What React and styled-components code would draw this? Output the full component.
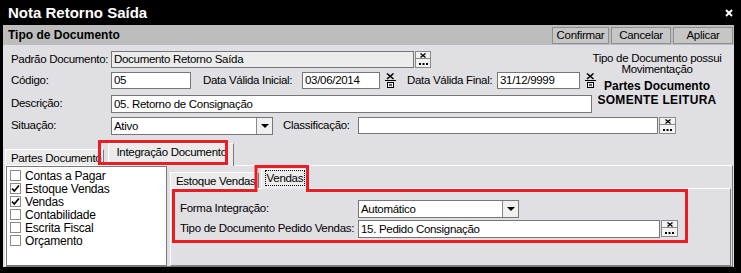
import React from "react";
import styled, { createGlobalStyle } from "styled-components";

const SANS = `"Liberation Sans", Arial, sans-serif`;

const GlobalStyle = createGlobalStyle`
  html, body {
    margin: 0;
    padding: 0;
    background: #000;
  }
  body {
    font-family: ${SANS};
    font-size: 11.5px;
    letter-spacing: -0.3px;
    color: #000;
  }
  * { box-sizing: border-box; }
`;

const Screen = styled.div`
  position: relative;
  width: 741px;
  height: 273px;
  background: #000;
  overflow: hidden;
  display: flex;
  flex-direction: column;
`;

const TitleBar = styled.div`
  height: 25px;
  display: flex;
  align-items: center;
  justify-content: space-between;
  padding: 0 8px 0 8px;
  color: #fff;
  font: bold 15px ${SANS};
  letter-spacing: 0;
`;

const Panel = styled.div`
  margin: 0 7px 0 3px;
  height: 242px;
  background: #e0dfe3;
  display: flex;
  flex-direction: column;
`;

const Header = styled.div`
  height: 20px;
  background: #bdbdbd;
  display: flex;
  align-items: center;
  justify-content: space-between;
  padding: 0 1px 0 5px;
  font: bold 12px ${SANS};
  letter-spacing: 0;
`;

const ButtonGroup = styled.div`
  display: flex;
  gap: 2px;
  font: 11.5px ${SANS};
  letter-spacing: -0.3px;
`;

const HeaderButton = styled.div`
  width: ${p => p.$w}px;
  height: 17px;
  border: 1px solid #8e8e8e;
  background: #c6c6c6;
  line-height: 15px;
  text-align: center;
`;

const FormGrid = styled.div`
  display: grid;
  grid-template-columns: 582px 128px;
  grid-template-rows: 17px 19px 18px 17px;
  row-gap: 4px;
  padding: 6px 0 0 8px;
`;

const Row = styled.div`
  display: flex;
  align-items: flex-start;
  grid-column: ${p => (p.$wide ? "1 / -1" : "1")};
  white-space: nowrap;
`;

const Label = styled.div`
  width: ${p => p.$w}px;
  margin-left: ${p => p.$ml || 0}px;
  flex: none;
  height: 17px;
  line-height: 17px;
  white-space: nowrap;
`;

const TextBox = styled.div`
  width: ${p => p.$w}px;
  height: ${p => p.$h || 17}px;
  flex: none;
  border: 1px solid #767676;
  background: ${p => (p.$disabled ? "#ececec" : "#fff")};
  padding: 0 2px;
  line-height: ${p => (p.$h || 17) - 2}px;
  overflow: hidden;
  white-space: nowrap;
`;

const Combo = styled.div`
  width: ${p => p.$w}px;
  height: 18px;
  flex: none;
  display: flex;
  border: 1px solid #767676;
  background: #fff;
`;

const ComboText = styled.div`
  flex: 1;
  padding: 0 2px;
  line-height: 16px;
`;

const ComboArrow = styled.div`
  width: 16px;
  border-left: 1px solid #8a8a8a;
  background: #f0f0f0;
  display: flex;
  align-items: center;
  justify-content: center;
`;

const Lookup = styled.div`
  width: ${p => p.$w || 16}px;
  height: 17px;
  margin-left: 1px;
  flex: none;
  border: 1px solid #8a8a8a;
  background: #f2f2f2;
  display: flex;
  flex-direction: column;
`;

const LookupHalf = styled.div`
  flex: 1;
  display: flex;
  justify-content: center;
  align-items: ${p => (p.$bottom ? "flex-end" : "center")};
  padding-bottom: ${p => (p.$bottom ? 2 : 0)}px;
  border-bottom: ${p => (p.$bottom ? "none" : "1px solid #8a8a8a")};
`;

const DateButton = styled.div`
  width: 13px;
  height: 17px;
  margin-left: 4px;
  flex: none;
`;

const Info = styled.div`
  grid-column: 2;
  grid-row: 1 / span 3;
  display: flex;
  flex-direction: column;
  align-items: center;
  padding-top: 2px;
  white-space: nowrap;
`;

const InfoLine = styled.div`
  line-height: 11px;
`;

const InfoBold = styled.div`
  font: bold 12px ${SANS};
  line-height: 14px;
  margin-top: ${p => p.$mt || 0}px;
  letter-spacing: ${p => p.$ls || 0}px;
`;

const TabStrip = styled.div`
  height: ${p => p.$h}px;
  margin-top: ${p => p.$mt || 0}px;
  padding-left: ${p => p.$pl || 0}px;
  display: flex;
  align-items: flex-end;
  gap: ${p => p.$gap || 0}px;
  flex: none;
`;

const Tab = styled.div`
  height: ${p => p.$h}px;
  margin-bottom: ${p => (p.$active ? -1 : 0)}px;
  padding: ${p => p.$pad};
  position: relative;
  z-index: ${p => (p.$active ? 1 : 0)};
  display: flex;
  align-items: ${p => (p.$active ? "flex-start" : "center")};
  background: #ebebeb;
  border-top: 1px solid #fff;
  border-left: 1px solid #fff;
  border-right: 1px solid #7a7a7a;
  white-space: nowrap;
`;

const Focus = styled.span`
  outline: 1px dotted #000;
  padding: 0 1px;
  line-height: 14px;
`;

const TabPage = styled.div`
  flex: 1;
  display: flex;
  margin: 0 1px 0 2px;
  border-top: 1px solid #fff;
  border-left: 1px solid #fff;
  border-right: 1px solid #7a7a7a;
  border-bottom: 1px solid #7a7a7a;
`;

const CheckList = styled.div`
  width: 161px;
  height: 100px;
  border: 1px solid #7a7a7a;
  background: #fff;
  padding: 2px 0 0 3px;
  font-size: 12px;
  letter-spacing: -0.2px;
`;

const CheckItem = styled.div`
  display: flex;
  align-items: center;
  gap: 4px;
  height: 13px;
`;

const Box = styled.div`
  width: 11px;
  height: 11px;
  border: 1px solid #8a8a8a;
  background: #fff;
  display: flex;
  align-items: center;
  justify-content: center;
`;

const RightArea = styled.div`
  flex: 1;
  display: flex;
  flex-direction: column;
  padding: 2px 0 0 3px;
`;

const InnerPage = styled.div`
  flex: 1;
  margin-right: 1px;
  border-top: 1px solid #fff;
  border-left: 1px solid #fff;
  border-right: 1px solid #808080;
  border-bottom: 1px solid #808080;
  padding: 11px 0 0 9px;
  display: grid;
  grid-template-rows: 18px 18px;
  row-gap: 2px;
  align-content: start;
`;

const Overlay = styled.svg`
  position: absolute;
  left: 0;
  top: 0;
  z-index: 10;
  pointer-events: none;
`;

const LookupButton = ({ w }) => (
  <Lookup $w={w}>
    <LookupHalf>
      <svg width="6" height="5" viewBox="0 0 6 5">
        <path d="M0.5 0.5L5.5 4.5M5.5 0.5L0.5 4.5" stroke="#000" strokeWidth="1.3" />
      </svg>
    </LookupHalf>
    <LookupHalf $bottom>
      <svg width="9" height="2" viewBox="0 0 9 2">
        <rect x="0" y="0" width="2" height="2" fill="#000" />
        <rect x="3.5" y="0" width="2" height="2" fill="#000" />
        <rect x="7" y="0" width="2" height="2" fill="#000" />
      </svg>
    </LookupHalf>
  </Lookup>
);

const DateIcon = () => (
  <DateButton>
    <svg width="13" height="17" viewBox="0 0 13 17">
      <path d="M3 1.5L9.5 7M9.5 1.5L3 7" stroke="#000" strokeWidth="1.6" />
      <rect x="1" y="8" width="11" height="1" fill="#000" />
      <rect x="3.5" y="10.5" width="6" height="5" fill="#fff" stroke="#000" strokeWidth="1" />
      <path d="M5 12L8 14M8 12L5 14" stroke="#000" strokeWidth="0.8" />
    </svg>
  </DateButton>
);

const Arrow = () => (
  <svg width="8" height="4" viewBox="0 0 8 4">
    <path d="M0 0H8L4 4Z" fill="#000" />
  </svg>
);

const Check = () => (
  <svg width="9" height="9" viewBox="0 0 9 9">
    <path d="M1 4.5L3.3 7L8 1.5" stroke="#000" strokeWidth="1.7" fill="none" />
  </svg>
);

const items = [
  { name: "Contas a Pagar", checked: false },
  { name: "Estoque Vendas", checked: true },
  { name: "Vendas", checked: true },
  { name: "Contabilidade", checked: false },
  { name: "Escrita Fiscal", checked: false },
  { name: "Orçamento", checked: false },
];

const App = () => {
  return (
    <Screen>
      <GlobalStyle />
      <TitleBar>
        <span>Nota Retorno Saída</span>
        <svg width="8" height="8" viewBox="0 0 8 8">
          <path d="M1 1L7 7M7 1L1 7" stroke="#fff" strokeWidth="2" />
        </svg>
      </TitleBar>
      <Panel>
        <Header>
          <span>Tipo de Documento</span>
          <ButtonGroup>
            <HeaderButton $w={57}>Confirmar</HeaderButton>
            <HeaderButton $w={60}>Cancelar</HeaderButton>
            <HeaderButton $w={60}>Aplicar</HeaderButton>
          </ButtonGroup>
        </Header>

        <FormGrid>
          <Row>
            <Label $w={100}>Padrão Documento:</Label>
            <TextBox $w={303} $disabled>Documento Retorno Saída</TextBox>
            <LookupButton />
          </Row>
          <Row>
            <Label $w={100}>Código:</Label>
            <TextBox $w={80}>05</TextBox>
            <Label $w={99} $ml={12}>Data Válida Inicial:</Label>
            <TextBox $w={78}>03/06/2014</TextBox>
            <DateIcon />
            <Label $w={90} $ml={10}>Data Válida Final:</Label>
            <TextBox $w={83}>31/12/9999</TextBox>
            <DateIcon />
          </Row>
          <Row>
            <Label $w={100}>Descrição:</Label>
            <TextBox $w={481} $h={18}>05. Retorno de Consignação</TextBox>
          </Row>
          <Info>
            <InfoLine>Tipo de Documento possui</InfoLine>
            <InfoLine>Movimentação</InfoLine>
            <InfoBold $mt={4}>Partes Documento</InfoBold>
            <InfoBold $ls={0.3}>SOMENTE LEITURA</InfoBold>
          </Info>
          <Row $wide>
            <Label $w={100}>Situação:</Label>
            <Combo $w={162}>
              <ComboText>Ativo</ComboText>
              <ComboArrow>
                <Arrow />
              </ComboArrow>
            </Combo>
            <Label $w={75} $ml={10}>Classificação:</Label>
            <TextBox $w={300}></TextBox>
            <LookupButton w={17} />
          </Row>
        </FormGrid>

        <TabStrip $h={22} $mt={9} $pl={2} $gap={4}>
          <Tab $h={16} $pad="0 2px 0 5px">Partes Documento</Tab>
          <Tab $active $h={23} $pad="2px 6px 0 7px">Integração Documento</Tab>
        </TabStrip>
        <TabPage>
          <CheckList>
            {items.map(item => (
              <CheckItem key={item.name}>
                <Box>{item.checked && <Check />}</Box>
                <span>{item.name}</span>
              </CheckItem>
            ))}
          </CheckList>
          <RightArea>
            <TabStrip $h={20} $gap={2}>
              <Tab $h={16} $pad="0 2px 0 5px">Estoque Vendas</Tab>
              <Tab $active $h={20} $pad="1px 3px 0 4px">
                <Focus>Vendas</Focus>
              </Tab>
            </TabStrip>
            <InnerPage>
              <Row>
                <Label $w={178}>Forma Integração:</Label>
                <Combo $w={161}>
                  <ComboText>Automático</ComboText>
                  <ComboArrow>
                    <Arrow />
                  </ComboArrow>
                </Combo>
              </Row>
              <Row>
                <Label $w={178}>Tipo de Documento Pedido Vendas:</Label>
                <TextBox $w={302} $h={18}>15. Pedido Consignação</TextBox>
                <LookupButton w={17} />
              </Row>
            </InnerPage>
          </RightArea>
        </TabPage>
      </Panel>

      <Overlay width="741" height="273" viewBox="0 0 741 273">
        <rect x="99.5" y="141.5" width="127" height="22" fill="none" stroke="#ec1c24" strokeWidth="3" />
        <path
          d="M173.5 190.5H256V166.5H307.5V190.5H686.5V241.5H173.5Z"
          fill="none"
          stroke="#ec1c24"
          strokeWidth="3"
        />
      </Overlay>
    </Screen>
  );
};

export default App;
